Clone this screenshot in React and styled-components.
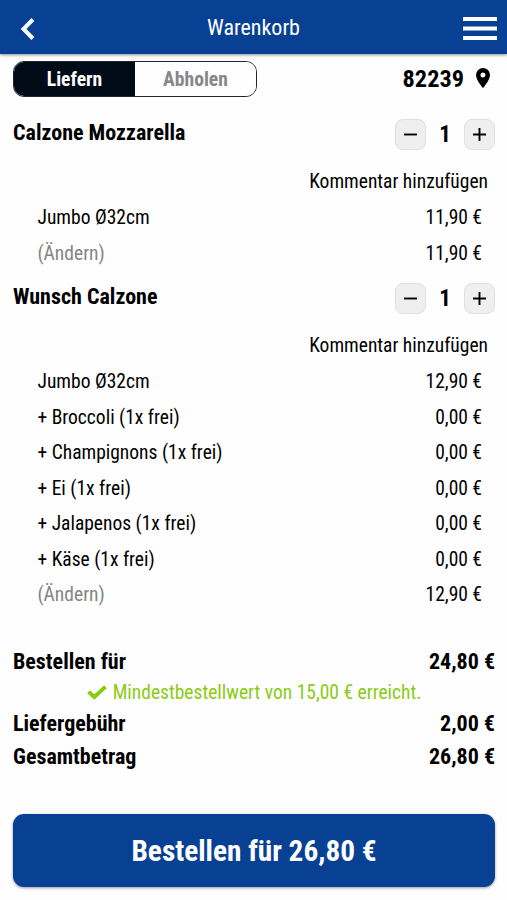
import React, { useState } from 'react';
import styled, { createGlobalStyle, css } from 'styled-components';

const GlobalStyle = createGlobalStyle`
  * {
    box-sizing: border-box;
  }

  body {
    margin: 0;
    background: #fefefe;
    color: #000;
    font-family: 'Roboto Condensed', Roboto, 'Liberation Sans', sans-serif;
    font-stretch: 75%;
    font-size: 19.5px;
    font-weight: 430;
  }

  button {
    font: inherit;
    font-stretch: 75%;
    cursor: pointer;
  }
`;

const Page = styled.div`
  min-height: 900px;
`;

const Header = styled.header`
  display: grid;
  grid-template-columns: 60px 1fr 60px;
  align-items: center;
  height: 54px;
  background: #084193;
  color: #fff;
  box-shadow: 0 1px 3px rgba(0, 0, 0, 0.45);
`;

const HeaderTitle = styled.h1`
  margin: 0;
  font-size: 22px;
  font-weight: 440;
  line-height: 56px;
  text-align: center;
`;

const HeaderButton = styled.button`
  display: flex;
  justify-content: ${({ $end }) => ($end ? 'flex-end' : 'flex-start')};
  padding: ${({ $end }) => ($end ? '1px 10px 0 0' : '1px 0 0 20px')};
  border: none;
  background: none;
  color: inherit;
`;

const Content = styled.main`
  padding: 7px 12px 0 13px;
`;

const DeliveryBar = styled.div`
  display: flex;
  justify-content: space-between;
  align-items: center;
  height: 36px;
`;

const Toggle = styled.div`
  display: flex;
  width: 244px;
  height: 36px;
  border: 1px solid #20262f;
  border-radius: 11px;
  overflow: hidden;
`;

const ToggleOption = styled.button`
  flex: 1;
  padding: 0;
  border: none;
  background: #fefefe;
  color: #85878a;
  font-size: 19.6px;
  font-weight: 700;

  ${({ $active }) =>
    $active &&
    css`
      background: #010b18;
      color: #fff;
    `}
`;

const Location = styled.div`
  display: flex;
  align-items: center;
  gap: 12px;
  height: 34px;
  margin-bottom: 2px;
  padding-right: 5px;
  font-size: 24.3px;
  font-weight: 700;
`;

const Items = styled.div`
  display: flex;
  flex-direction: column;
  gap: 12px;
  margin-top: 21px;
`;

const ItemHead = styled.div`
  display: flex;
  justify-content: space-between;
  height: 45px;
`;

const ItemName = styled.h2`
  margin: 0;
  font-size: 22px;
  font-weight: 700;
  line-height: 29px;
`;

const Stepper = styled.div`
  display: flex;
  align-items: center;
  height: 32px;
`;

const StepButton = styled.button`
  display: flex;
  align-items: center;
  justify-content: center;
  width: 31px;
  height: 31px;
  padding: 0;
  border: 1px solid #dfdfdf;
  border-radius: 8px;
  background: #efefef;
  color: #000;
`;

const Amount = styled.span`
  width: 38px;
  font-size: 23px;
  font-weight: 700;
  text-align: center;
`;

const Comment = styled.div`
  height: 36px;
  padding-right: 7px;
  line-height: 38px;
  text-align: right;
`;

const Line = styled.div`
  display: flex;
  justify-content: space-between;
  height: 35.5px;
  padding: 0 13px 0 24.5px;
  line-height: 38px;
`;

const Change = styled.span`
  color: #858585;
`;

const Summary = styled.div`
  margin-top: 33px;
`;

const SummaryRow = styled.div`
  display: flex;
  justify-content: space-between;
  height: 33px;
  font-size: 22px;
  font-weight: 700;
  line-height: 33px;
`;

const MinimumReached = styled.div`
  display: flex;
  align-items: center;
  justify-content: center;
  gap: 6px;
  height: 29.5px;
  color: #8acb13;
`;

const OrderButton = styled.button`
  display: block;
  width: 100%;
  height: 73px;
  margin-top: 40.5px;
  padding: 2px 0 0;
  border: none;
  border-radius: 11px;
  background: #084193;
  color: #fff;
  font-size: 29.3px;
  font-weight: 700;
  box-shadow: 0 1px 3px rgba(0, 0, 0, 0.4);
`;

const BackIcon = () => (
  <svg width="16" height="22" viewBox="0 0 16 22" fill="none" stroke="currentColor" strokeWidth="4">
    <path d="M12.900 1.500 3.500 11l9.400 9.500" />
  </svg>
);

const MenuIcon = () => (
  <svg width="34" height="24" viewBox="0 0 34 24" fill="currentColor">
    <path d="M0 0h34v4H0zM0 9.500h34v4H0zM0 19h34v4H0z" />
  </svg>
);

const PinIcon = () => (
  <svg width="14" height="20" viewBox="0 0 14 20" fill="currentColor">
    <path d="M7 0a7 7 0 0 0-7 7c0 5.200 7 13 7 13s7-7.800 7-13a7 7 0 0 0-7-7zm0 9.500a2.500 2.500 0 1 1 0-5 2.500 2.500 0 0 1 0 5z" />
  </svg>
);

const CheckIcon = () => (
  <svg width="20" height="15" viewBox="0 0 20 15" fill="none" stroke="currentColor" strokeWidth="4">
    <path d="M1.500 6.800 7.300 12 18.500 1.800" />
  </svg>
);

const StepIcon = ({ plus }) => (
  <svg width="13" height="13" viewBox="0 0 13 13" stroke="currentColor" strokeWidth="1.900">
    <path d={plus ? 'M0 6.500h13M6.500 0v13' : 'M0 6.500h13'} />
  </svg>
);

const items = [
  {
    name: 'Calzone Mozzarella',
    total: '11,90 €',
    lines: [['Jumbo Ø32cm', '11,90 €']],
  },
  {
    name: 'Wunsch Calzone',
    total: '12,90 €',
    lines: [
      ['Jumbo Ø32cm', '12,90 €'],
      ['+ Broccoli (1x frei)', '0,00 €'],
      ['+ Champignons (1x frei)', '0,00 €'],
      ['+ Ei (1x frei)', '0,00 €'],
      ['+ Jalapenos (1x frei)', '0,00 €'],
      ['+ Käse (1x frei)', '0,00 €'],
    ],
  },
];

function CartItem({ item }) {
  const [amount, setAmount] = useState(1);

  return (
    <section>
      <ItemHead>
        <ItemName>{item.name}</ItemName>
        <Stepper>
          <StepButton onClick={() => setAmount(Math.max(0, amount - 1))}>
            <StepIcon />
          </StepButton>
          <Amount>{amount}</Amount>
          <StepButton onClick={() => setAmount(amount + 1)}>
            <StepIcon plus />
          </StepButton>
        </Stepper>
      </ItemHead>
      <Comment>Kommentar hinzufügen</Comment>
      {item.lines.map(([label, price]) => (
        <Line key={label}>
          <span>{label}</span>
          <span>{price}</span>
        </Line>
      ))}
      <Line>
        <Change>(Ändern)</Change>
        <span>{item.total}</span>
      </Line>
    </section>
  );
}

export default function App() {
  const [mode, setMode] = useState('Liefern');

  return (
    <Page>
      <GlobalStyle />
      <Header>
        <HeaderButton>
          <BackIcon />
        </HeaderButton>
        <HeaderTitle>Warenkorb</HeaderTitle>
        <HeaderButton $end>
          <MenuIcon />
        </HeaderButton>
      </Header>

      <Content>
        <DeliveryBar>
          <Toggle>
            {['Liefern', 'Abholen'].map((option) => (
              <ToggleOption key={option} $active={mode === option} onClick={() => setMode(option)}>
                {option}
              </ToggleOption>
            ))}
          </Toggle>
          <Location>
            82239
            <PinIcon />
          </Location>
        </DeliveryBar>

        <Items>
          {items.map((item) => (
            <CartItem key={item.name} item={item} />
          ))}
        </Items>

        <Summary>
          <SummaryRow>
            <span>Bestellen für</span>
            <span>24,80 €</span>
          </SummaryRow>
          <MinimumReached>
            <CheckIcon />
            Mindestbestellwert von 15,00 € erreicht.
          </MinimumReached>
          <SummaryRow>
            <span>Liefergebühr</span>
            <span>2,00 €</span>
          </SummaryRow>
          <SummaryRow>
            <span>Gesamtbetrag</span>
            <span>26,80 €</span>
          </SummaryRow>
        </Summary>

        <OrderButton>Bestellen für 26,80 €</OrderButton>
      </Content>
    </Page>
  );
}
